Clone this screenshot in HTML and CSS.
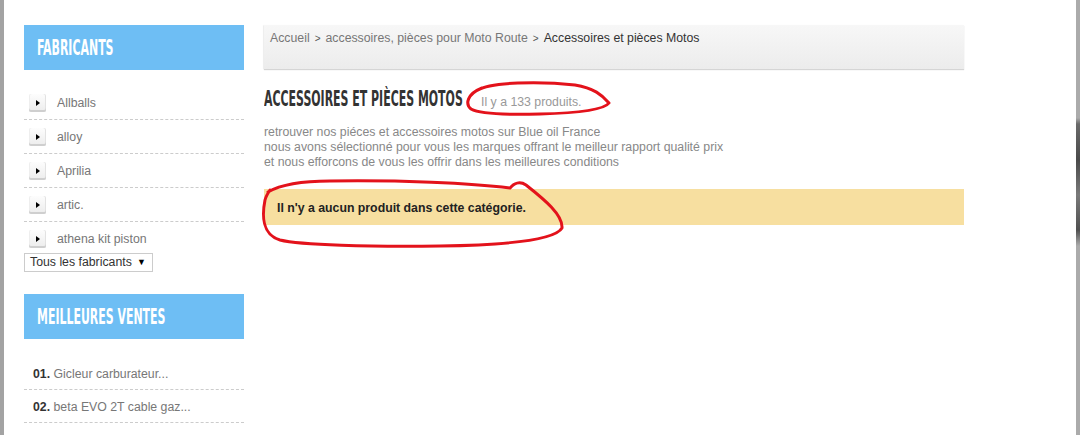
FILE: index.html
```html
<!DOCTYPE html>
<html>

<head>
    <meta charset="utf-8">
    <meta name="viewport" content="width=device-width">
    <title>Accessoires et pièces Motos</title>

    <link rel="stylesheet" href="styles.css">

</head>

<body>
    <div class="screen">
        <div class="edge edge-left"></div>

        <div class="page">
            <aside class="sidebar">
                <section class="block">
                    <h2 class="block-title"><span>Fabricants</span></h2>
                    <ul class="maker-list">
                        <li><span class="bullet"></span><a href="#">Allballs</a></li>
                        <li><span class="bullet"></span><a href="#">alloy</a></li>
                        <li><span class="bullet"></span><a href="#">Aprilia</a></li>
                        <li><span class="bullet"></span><a href="#">artic.</a></li>
                        <li><span class="bullet"></span><a href="#">athena kit piston</a></li>
                    </ul>
                    <div class="fake-select">Tous les fabricants <span class="caret">&#9660;</span></div>
                </section>

                <section class="block">
                    <h2 class="block-title"><span>Meilleures ventes</span></h2>
                    <ol class="top-list">
                        <li><strong>01.</strong> <a href="#">Gicleur carburateur...</a></li>
                        <li><strong>02.</strong> <a href="#">beta EVO 2T cable gaz...</a></li>
                        <li><strong>03.</strong> <a href="#">STR kit joints moteur...</a></li>
                    </ol>
                </section>
            </aside>

            <main class="content">
                <div class="breadcrumb">
                    <a href="#">Accueil</a><span class="sep">&gt;</span><a href="#">accessoires, pièces pour Moto Route</a><span class="sep">&gt;</span><span class="current">Accessoires et pièces Motos</span>
                </div>

                <div class="cat-head">
                    <h1 class="cat-title"><span>Accessoires et pièces Motos</span></h1>
                    <span class="count">Il y a 133 produits.</span>
                </div>

                <div class="cat-desc">
                    retrouver nos piéces et accessoires motos sur Blue oil France<br>
                    nous avons sélectionné pour vous les marques offrant le meilleur rapport qualité prix<br>
                    et nous efforcons de vous les offrir dans les meilleures conditions
                </div>

                <p class="alert">Il n'y a aucun produit dans cette catégorie.</p>
            </main>
        </div>

        <div class="edge edge-right"></div>
    </div>

    <!-- hand drawn red marks over the screenshot -->
    <svg class="scribbles" width="1080" height="435" viewBox="0 0 1080 435">
        <path d="M478 90 C490 82, 540 81, 575 85 C594 88, 602 95, 609 103 C604 110, 580 113, 540 114 C505 115, 480 114, 471 109 C465 104, 467 94, 482 88" />
        <path d="M268 192 C280 185, 300 181, 330 181 C400 180, 470 183, 510 188 C514 183, 520 181, 526 185 C545 200, 563 215, 562 228 C555 240, 510 245, 440 246 C370 247, 300 245, 280 240 C262 235, 262 215, 265 200 C266 196, 268 193, 270 190" />
    </svg>
</body>

</html>
```

FILE: styles.css
```css
html,
body {
    margin: 0;
    font-family: "Liberation Sans", Arial, sans-serif;
    font-size: 12.3px;
    color: #777;
    background: #fff;
}

a {
    color: inherit;
    text-decoration: none;
}

.screen {
    display: flex;
    min-height: 100vh;
}

.edge {
    width: 4px;
    flex: none;
}

.edge-left {
    background-color: #a3a3a3;
}

.edge-right {
    background: linear-gradient(to bottom, #ababab 0, #ababab 118px, #6a6a6a 124px, #4a4a4a 160px, #7a7a7a 195px, #505050 230px, #ababab 246px, #ababab 100%);
}

.page {
    flex: 1;
    display: flex;
    gap: 20px;
    padding: 25px 20px 0;
}

/* sidebar */

.sidebar {
    width: 220px;
    flex: none;
}

.block-title {
    margin: 0;
    height: 45px;
    padding-left: 13px;
    display: flex;
    align-items: center;
    background-color: #6ebef4;
    color: #fff;
    font-family: "DejaVu Sans Condensed", "DejaVu Sans", sans-serif;
    font-weight: bold;
    font-size: 21px;
    text-transform: uppercase;
    white-space: nowrap;
}

.block-title span,
.cat-title span {
    display: inline-block;
    transform: scaleX(0.58);
    transform-origin: left center;
}

.maker-list {
    list-style: none;
    margin: 16px 0 0;
    padding: 0;
}

.maker-list li {
    display: flex;
    align-items: center;
    gap: 11px;
    padding: 8px 0 7px 5px;
    line-height: 18px;
    border-bottom: 1px dashed #ccc;
}

.maker-list li:last-child {
    border-bottom: none;
    padding-bottom: 5px;
}

.bullet {
    position: relative;
    width: 17px;
    height: 18px;
    box-sizing: border-box;
    border-radius: 2px;
    background: linear-gradient(#fdfdfd, #ececec);
    box-shadow: inset 0 -2px 0 #cfcfcf, inset -1px 0 0 #e2e2e2, inset 1px 0 0 #eee;
}

.bullet::after {
    content: "";
    position: absolute;
    left: 7px;
    top: 6px;
    border-left: 4px solid #000;
    border-top: 3px solid transparent;
    border-bottom: 3px solid transparent;
}

.fake-select {
    width: 129px;
    height: 19px;
    box-sizing: border-box;
    border: 1px solid #ccc;
    padding: 0 6px 0 5px;
    display: flex;
    align-items: center;
    justify-content: space-between;
    color: #333;
    line-height: 17px;
}

.caret {
    font-size: 9px;
    color: #000;
}

.block + .block {
    margin-top: 22px;
}

.top-list {
    list-style: none;
    margin: 18px 0 0;
    padding: 0;
}

.top-list li {
    padding: 9px 0 7px 9px;
    line-height: 16px;
    border-bottom: 1px dashed #ccc;
    white-space: nowrap;
}

.top-list strong {
    color: #333;
}

/* main column */

.content {
    width: 700px;
    flex: none;
}

.breadcrumb {
    height: 44px;
    box-sizing: border-box;
    padding: 5px 6px 0;
    line-height: 16px;
    background: linear-gradient(#f7f7f7, #ececec);
    box-shadow: 0 1px 1px rgba(0, 0, 0, 0.16), -1px 0 1px rgba(0, 0, 0, 0.04);
}

.breadcrumb .sep {
    font-size: 10px;
    color: #555;
    margin: 0 5px;
}

.breadcrumb .current {
    color: #333;
}

.cat-head {
    display: flex;
    align-items: baseline;
    gap: 19px;
    margin-top: 18px;
}

.cat-title {
    margin: 0;
    width: 198px;
    flex: none;
    font-family: "DejaVu Sans Condensed", "DejaVu Sans", sans-serif;
    font-weight: bold;
    font-size: 21px;
    line-height: 25px;
    color: #333;
    text-transform: uppercase;
    white-space: nowrap;
}

.count {
    color: #999;
}

.cat-desc {
    margin-top: 13px;
    line-height: 15px;
    color: #888;
}

.alert {
    margin: 19px 0 0;
    padding: 12px 13px 10px;
    line-height: 14px;
    background-color: #f7dfa0;
    color: #222;
    font-weight: bold;
}

.scribbles {
    position: absolute;
    top: 0;
    left: 0;
    pointer-events: none;
    fill: none;
    stroke: #e3121b;
    stroke-width: 3;
    stroke-linejoin: round;
    stroke-linecap: round;
}
```
